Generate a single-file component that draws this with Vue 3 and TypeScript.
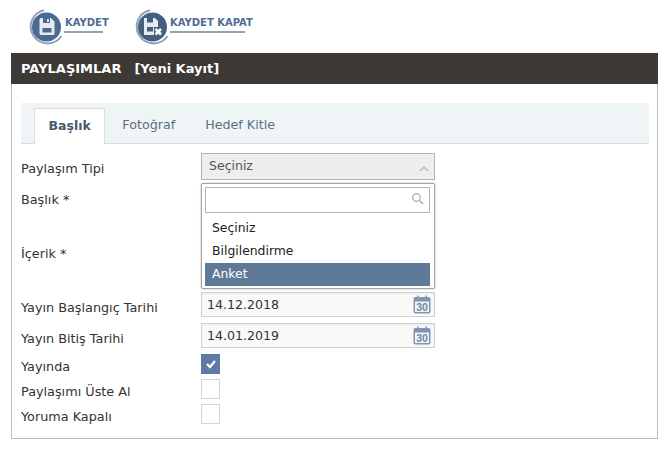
<script setup lang="ts">
const tabs = ['Başlık', 'Fotoğraf', 'Hedef Kitle']
const options = ['Seçiniz', 'Bilgilendirme', 'Anket']
const dates = [
  { label: 'Yayın Başlangıç Tarihi', value: '14.12.2018' },
  { label: 'Yayın Bitiş Tarihi', value: '14.01.2019' },
]
const checks = [
  { label: 'Yayında', on: true },
  { label: 'Paylaşımı Üste Al', on: false },
  { label: 'Yoruma Kapalı', on: false },
]
</script>

<template>
  <div class="page">
    <div class="toolbar">
      <div class="tool tool-save">
        <svg class="tool-icon" width="38" height="36" viewBox="0 0 38 36">
          <path d="M16 1.200A16.800 16.800 0 1 0 33.500 27" fill="none" stroke="#8ba0b8" stroke-width="2" />
          <circle cx="18.500" cy="18" r="14.500" fill="#4b6a90" />
          <path d="M11.500 10.500a1.500 1.500 0 0 1 1.500-1.500h10l3.500 3.500v12a1.500 1.500 0 0 1-1.500 1.500H13a1.500 1.500 0 0 1-1.500-1.500z" fill="#e6ebf1" />
          <rect x="15" y="9" width="7" height="5" fill="#4b6a90" />
          <rect x="19" y="10" width="2" height="3" fill="#e6ebf1" />
          <rect x="14.500" y="19" width="9" height="4.500" fill="#4b6a90" />
        </svg>
        <div class="tool-text tool-text-save">KAYDET</div>
      </div>
      <div class="tool tool-close">
        <svg class="tool-icon" width="38" height="36" viewBox="0 0 38 36">
          <path d="M16 1.200A16.800 16.800 0 1 0 33.500 27" fill="none" stroke="#8ba0b8" stroke-width="2" />
          <circle cx="18.500" cy="18" r="14.500" fill="#45607f" />
          <path d="M10 9h11l3 3v6h-4v8H10z" fill="#e6ebf1" />
          <rect x="13" y="9" width="6" height="4.500" fill="#45607f" />
          <rect x="13" y="18" width="6" height="4.500" fill="#45607f" />
          <path d="M21.500 20l5.500 5.500M27 20l-5.500 5.500" stroke="#fff" stroke-width="2.600" />
        </svg>
        <div class="tool-text tool-text-close">KAYDET KAPAT</div>
      </div>
    </div>

    <div class="panel">
      <div class="panel-head">
        <span>PAYLAŞIMLAR</span>
        <span>[Yeni Kayıt]</span>
      </div>
      <div class="panel-body">
        <div class="tabs">
          <div v-for="(t, i) in tabs" :key="t" class="tab" :class="{ active: i === 0 }">{{ t }}</div>
        </div>

        <div class="row row-select">
          <label>Paylaşım Tipi</label>
          <div class="control">
            <div class="select">
              <span>Seçiniz</span>
              <svg width="10" height="6" viewBox="0 0 10 6"><path d="M1 5l4-4 4 4" fill="none" stroke="#b4b4b4" stroke-width="1.400" /></svg>
            </div>
            <div class="dropdown">
              <div class="search">
                <svg width="13" height="13" viewBox="0 0 13 13">
                  <circle cx="5.500" cy="5.500" r="3.800" fill="none" stroke="#aaa" stroke-width="1.200" />
                  <path d="M8.500 8.500l3.500 3.500" stroke="#aaa" stroke-width="1.500" />
                </svg>
              </div>
              <div v-for="(o, i) in options" :key="o" class="option" :class="{ picked: i === 2 }">{{ o }}</div>
            </div>
          </div>
        </div>
        <div class="row row-title"><label>Başlık *</label></div>
        <div class="row row-content"><label>İçerik *</label></div>

        <div v-for="d in dates" :key="d.label" class="row row-date">
          <label>{{ d.label }}</label>
          <div class="date">
            <span>{{ d.value }}</span>
            <svg width="18" height="19" viewBox="0 0 18 19">
              <rect x="0.500" y="2" width="17" height="16.500" rx="2" fill="#7e95b3" />
              <rect x="2" y="6.500" width="14" height="10.500" fill="#f1f4f7" />
              <rect x="4" y="0.500" width="1.600" height="3.500" fill="#7e95b3" />
              <rect x="12.400" y="0.500" width="1.600" height="3.500" fill="#7e95b3" />
              <text x="9" y="15.500" text-anchor="middle" class="cal-num">30</text>
            </svg>
          </div>
        </div>

        <div v-for="c in checks" :key="c.label" class="row row-check">
          <label>{{ c.label }}</label>
          <div class="check" :class="{ on: c.on }">
            <svg v-if="c.on" width="12" height="10" viewBox="0 0 12 10"><path d="M2 5l3 3 5-6" fill="none" stroke="#fff" stroke-width="2.200" /></svg>
          </div>
        </div>
      </div>
    </div>
  </div>
</template>

<style scoped>
.page {
  width: 671px;
  height: 469px;
  background: #fff;
  font-family: "DejaVu Sans", Verdana, sans-serif;
  font-size: 12.500px;
  color: #333;
  overflow: hidden;
}
.toolbar {
  height: 53px;
  display: flex;
  padding-left: 28px;
  box-sizing: border-box;
}
.tool {
  position: relative;
  height: 53px;
}
.tool-save { width: 106px; }
.tool-close { width: 130px; }
.tool-icon {
  position: absolute;
  left: 0;
  top: 9px;
  z-index: 1;
}
.tool-text {
  position: absolute;
  top: 17px;
  left: 36px;
  height: 12px;
  font-size: 10px;
  font-weight: 700;
  line-height: 12px;
  color: #4f6d92;
  white-space: nowrap;
  border-bottom: 2px solid #8fa3bb;
  padding-bottom: 2px;
  box-sizing: content-box;
}
.tool-text-save { width: 38px; padding-left: 1px; }
.tool-text-close { width: 75px; }
.panel {
  margin-left: 11px;
  width: 647px;
  height: 386px;
  box-sizing: border-box;
  border: 1px solid #bdbdbd;
  border-top: 0;
}
.panel-head {
  height: 31px;
  margin: 0 -1px;
  background: #3d3935;
  color: #fff;
  font-weight: 700;
  font-size: 13px;
  display: flex;
  gap: 13px;
  align-items: center;
  padding-left: 10px;
}
.panel-body {
  padding: 19px 8px 0 9px;
}
.tabs {
  height: 41px;
  box-sizing: border-box;
  background: #eff4f7;
  border-bottom: 1px solid #d9dfe3;
  padding: 5px 0 0 13px;
  display: flex;
}
.tab {
  height: 36px;
  padding: 0 13px 0 15px;
  margin-left: 2px;
  line-height: 33px;
  color: #5d6f7f;
  font-size: 12.700px;
  box-sizing: border-box;
}
.tab.active {
  background: #fff;
  border: 1px solid #d9dfe3;
  border-bottom: 0;
  color: #49596b;
  font-weight: 700;
  font-size: 12.500px;
  padding: 0 13.500px;
  margin-left: 0;
}
.row {
  display: flex;
  align-items: flex-start;
}
.row label {
  width: 180px;
  flex: none;
  color: #333;
  font-size: 12.800px;
}
.row-select { height: 28px; padding-top: 9px; padding-bottom: 3px; }
.row-select label { padding-top: 8px; }
.row-title { height: 54px; padding-top: 8px; box-sizing: border-box; }
.row-content { height: 54px; padding-top: 8px; box-sizing: border-box; }
.row-date {
  height: 25px;
  margin-bottom: 6px;
  align-items: center;
}
.row-date label { padding-top: 5px; }
.row-check {
  height: 20px;
  margin-bottom: 5px;
  align-items: center;
}
.row-check label { padding-top: 4px; }
.control {
  position: relative;
  width: 234px;
}
.select {
  height: 27px;
  box-sizing: border-box;
  background: #eee;
  border: 1px solid #b3b3b3;
  display: flex;
  align-items: center;
  justify-content: space-between;
  padding: 0 5px 0 7px;
  color: #555;
}
.select span { margin-top: -3px; }
.select svg { margin-top: 4px; }
.dropdown {
  position: absolute;
  left: 0;
  top: 30px;
  width: 234px;
  height: 106px;
  box-sizing: border-box;
  background: #fff;
  border: 1px solid #a5a5a5;
  border-radius: 2px;
  box-shadow: 0 0 2px rgba(0, 0, 0, 0.35);
  padding: 3px 4px 3px 3px;
  z-index: 2;
}
.search {
  height: 26px;
  box-sizing: border-box;
  border: 1px solid #b3b3b3;
  display: flex;
  align-items: center;
  justify-content: flex-end;
  padding-right: 5px;
  margin-bottom: 4px;
}
.search svg { margin-top: -3px; }
.option {
  height: 23px;
  line-height: 22px;
  padding-left: 7px;
  color: #222;
  font-size: 12.400px;
}
.option.picked {
  background: #5f7999;
  color: #fff;
}
.date {
  width: 234px;
  height: 25px;
  box-sizing: border-box;
  background: #f9f9f9;
  border: 1px solid #cfcfcf;
  box-shadow: inset 0 1px 2px rgba(0, 0, 0, 0.06);
  display: flex;
  align-items: center;
  justify-content: space-between;
  padding: 0 3px 0 5px;
  color: #333;
  font-size: 12.600px;
}
.cal-num {
  font-family: "Liberation Sans", Arial, sans-serif;
  font-size: 10.500px;
  font-weight: 700;
  fill: #6f88a8;
}
.check {
  width: 19px;
  height: 20px;
  box-sizing: border-box;
  border: 1px solid #d5d5d5;
  display: flex;
  align-items: center;
  justify-content: center;
}
.check.on {
  background: #5f7ba3;
  border-color: #5f7ba3;
}
</style>
